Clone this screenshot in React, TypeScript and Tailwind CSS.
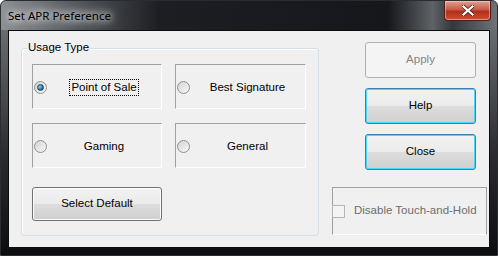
import React from 'react';

const font = { fontFamily: '"Liberation Sans", Arial, sans-serif' };

function Radio({ checked }: { checked?: boolean }) {
  return (
    <span className="w-[13px] h-[13px] rounded-full border border-[#8f8f8f] bg-gradient-to-br from-[#d4d4d4] to-[#f8f8f8] flex items-center justify-center shrink-0">
      {checked && (
        <span className="w-[7px] h-[7px] rounded-full bg-[radial-gradient(circle_at_35%_35%,#8fd0f0,#1d5f8a_70%)] border border-[#1a4a6a]" />
      )}
    </span>
  );
}

function RadioBox({ label, checked, focus }: { label: string; checked?: boolean; focus?: boolean }) {
  return (
    <div className="h-[45px] border border-t-[#a0a0a0] border-l-[#a0a0a0] border-r-white border-b-white flex items-center pl-[1px] pt-[1px]">
      <Radio checked={checked} />
      <div className="flex-1 flex justify-center">
        <span className={`text-[11.5px] text-black px-[1px] leading-[15px] ${focus ? 'outline outline-1 outline-dotted outline-black' : ''}`}>
          {label}
        </span>
      </div>
    </div>
  );
}

function Btn({ label, kind }: { label: string; kind: 'normal' | 'focus' | 'disabled' }) {
  const cls =
    kind === 'disabled'
      ? 'border-[#adb2b5] bg-[#f4f4f4] text-[#838383]'
      : kind === 'focus'
      ? 'border-[#3c7fb1] bg-[linear-gradient(#f2f2f2_0%,#ebebeb_50%,#dddddd_51%,#cfcfcf_100%)] text-black shadow-[inset_0_0_0_1px_#48d8fb]'
      : 'border-[#707070] bg-[linear-gradient(#f2f2f2_0%,#ebebeb_50%,#dddddd_51%,#cfcfcf_100%)] text-black shadow-[inset_0_0_0_1px_#fcfcfc]';
  return (
    <div className={`h-[36px] rounded-[3px] border flex items-center justify-center text-[11.5px] ${cls}`}>
      {label}
    </div>
  );
}

export default function App() {
  return (
    <div
      className="w-[498px] h-[256px] flex flex-col bg-[linear-gradient(90deg,#8c8f93_0%,#55585c_15%,#1c1e23_32%,#15171b_78%,#5f6266_87%,#34373b_91%,#707377_100%)] rounded-t-[6px] border border-[#2a2c30]"
      style={font}
    >
      {/* title bar */}
      <div className="h-[29px] flex items-start">
        <span
          className="ml-[7px] mt-[6px] text-[11.5px] text-black [text-shadow:0_0_6px_#e8e8e8,0_0_10px_#e0e0e0,0_0_14px_#d8d8d8]"
          style={{ fontFamily: '"Noto Sans", sans-serif' }}
        >
          Set APR Preference
        </span>
        <div className="ml-auto mr-[6px] w-[47px] h-[20px] rounded-b-[4px] border border-t-0 border-[#4a1e18] bg-[linear-gradient(#e0a090_0%,#c85a47_45%,#b0301c_55%,#d24d2f_100%)] flex items-center justify-center shadow-[inset_0_0_0_1px_rgba(255,220,210,0.5)]">
          <svg width="12" height="11" viewBox="0 0 12 11">
            <path d="M1 1 L11 10 M11 1 L1 10" stroke="#3a1a14" strokeWidth="3.6" strokeLinecap="square" />
            <path d="M1.5 1.5 L10.5 9.5 M10.5 1.5 L1.5 9.5" stroke="#ffffff" strokeWidth="2.2" strokeLinecap="square" />
          </svg>
        </div>
      </div>

      {/* client area */}
      <div className="flex-1 px-[7px] pb-[7px] bg-[linear-gradient(#6a6d70,#2a2c30_55%,#0c0d10)]">
        <div className="h-full border border-[#0b0c0e] bg-[#f0f0f0] flex">
          {/* usage type group */}
          <div className="ml-[12px] mt-[17px] w-[298px] h-[188px] relative border border-[#d5dfe5] rounded-[3px] shadow-[inset_1px_1px_0_#fff] pl-[10px] pt-[15px] flex flex-col">
            <span className="absolute left-[5px] top-[-9px] px-[1px] bg-[#f0f0f0] text-[11.5px] text-black leading-[15px]">
              Usage Type
            </span>
            <div className="grid grid-cols-[130px_131px] gap-x-[13px] gap-y-[14px]">
              <RadioBox label="Point of Sale" checked focus />
              <RadioBox label="Best Signature" />
              <RadioBox label="Gaming" />
              <RadioBox label="General" />
            </div>
            <div className="mt-[19px] w-[130px]">
              <div className="h-[34px] rounded-[3px] border border-[#707070] bg-[linear-gradient(#f2f2f2_0%,#ebebeb_50%,#dddddd_51%,#cfcfcf_100%)] shadow-[inset_0_0_0_1px_#fcfcfc] flex items-center justify-center text-[11.5px] text-black">
                Select Default
              </div>
            </div>
          </div>

          {/* right column */}
          <div className="ml-[13px] flex flex-col">
            <div className="ml-[33px] mt-[11px] w-[111px] flex flex-col gap-[10px]">
              <Btn label="Apply" kind="disabled" />
              <Btn label="Help" kind="focus" />
              <Btn label="Close" kind="focus" />
            </div>
            <div className="mt-[17px] w-[155px] h-[48px] border border-[#a0a0a0] border-b-white flex items-center">
              <span className="w-[13px] h-[13px] border border-[#b5b5b5] bg-[#f4f4f4] shrink-0 -ml-[1px]" />
              <span className="ml-[9px] text-[11.5px] text-[#6d6d6d] whitespace-nowrap">Disable Touch-and-Hold</span>
            </div>
          </div>
        </div>
      </div>
    </div>
  );
}
